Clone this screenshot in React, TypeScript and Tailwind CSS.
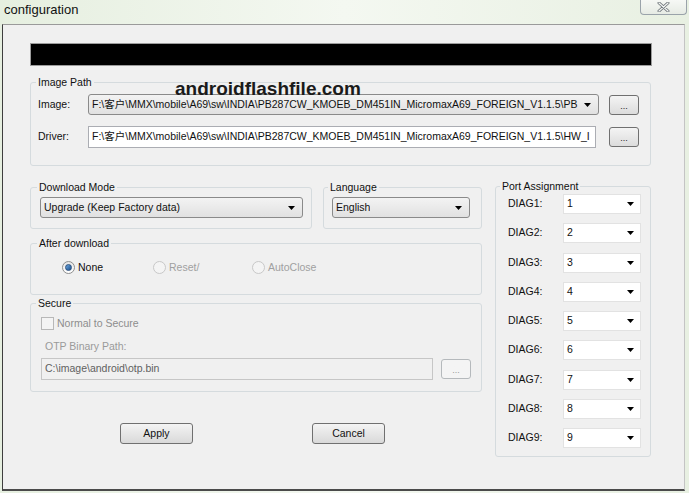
import React from "react";

const FONT = { fontFamily: '"Liberation Sans", "Noto Sans CJK SC", Arial, sans-serif' };

function Arrow() {
  return (
    <svg width="7" height="4" viewBox="0 0 7 4" className="shrink-0">
      <path d="M0 0h7L3.5 4z" fill="#000" />
    </svg>
  );
}

function Combo({ text, w }: { text: string; w: string }) {
  return (
    <div
      className={`${w} flex h-[21px] shrink-0 items-center justify-between overflow-hidden rounded-[3px] border border-[#8a8a8a] bg-gradient-to-b from-[#f3f3f3] to-[#e1e1e1] pl-[3px] pr-[7px]`}
    >
      <span className="overflow-hidden whitespace-nowrap text-[#111]">{text}</span>
      <span className="ml-[6px] flex items-center">
        <Arrow />
      </span>
    </div>
  );
}

function DotsButton({ disabled }: { disabled?: boolean }) {
  return (
    <div
      className={`flex h-[20px] w-[30px] shrink-0 items-center justify-center rounded-[3px] border bg-gradient-to-b ${
        disabled
          ? "border-[#b5b9bc] from-[#f4f4f4] to-[#f4f4f4] text-[#9a9a9a]"
          : "border-[#707070] from-[#f4f4f4] to-[#dcdcdc] text-[#222]"
      } pt-[3px] text-[9px] leading-none`}
    >
      ...
    </div>
  );
}

function Button({ label }: { label: string }) {
  return (
    <div className="flex h-[21px] w-[73px] items-center justify-center rounded-[3px] border border-[#707070] bg-gradient-to-b from-[#f4f4f4] to-[#d9d9d9] text-[#111]">
      {label}
    </div>
  );
}

function Radio({ checked, disabled, label, w }: { checked?: boolean; disabled?: boolean; label: string; w: string }) {
  return (
    <div className={`${w} flex items-center gap-[3px]`}>
      <span
        className={`flex h-[13px] w-[13px] items-center justify-center rounded-full border ${
          disabled ? "border-[#c8c8c8] bg-[#f4f4f4]" : "border-[#8e8f8f] bg-gradient-to-b from-[#e6e6e6] to-[#ffffff]"
        }`}
      >
        {checked && (
          <span className="h-[7px] w-[7px] rounded-full border border-[#2a4f7d] bg-gradient-to-br from-[#6aa7e0] to-[#1b4f8c]" />
        )}
      </span>
      <span className={disabled ? "text-[#a0a0a0]" : "text-[#111]"}>{label}</span>
    </div>
  );
}

function Legend({ children, ml = "ml-[5px]" }: { children: React.ReactNode; ml?: string }) {
  return <legend className={`${ml} px-[2px] leading-[14px] text-[#111]`}>{children}</legend>;
}

function PortRow({ n }: { n: number }) {
  return (
    <div className="flex h-[20px] items-center">
      <span className="w-[55px] text-[#111]">DIAG{n}:</span>
      <div className="flex h-[20px] w-[78px] items-center justify-between border border-[#e2e2e2] bg-white pl-[3px] pr-[6px]">
        <span className="text-[#111]">{n}</span>
        <Arrow />
      </div>
    </div>
  );
}

const FS = "rounded-[3px] border border-[#d5dbde] p-0";

export default function App() {
  const imgPath =
    "F:\\客户\\MMX\\mobile\\A69\\sw\\INDIA\\PB287CW_KMOEB_DM451IN_MicromaxA69_FOREIGN_V1.1.5\\PB";
  const drvPath =
    "F:\\客户\\MMX\\mobile\\A69\\sw\\INDIA\\PB287CW_KMOEB_DM451IN_MicromaxA69_FOREIGN_V1.1.5\\HW_I";
  return (
    <div
      className="relative h-[493px] w-[689px] overflow-hidden bg-gradient-to-r from-[#e6efe0] via-[#f4f8f1] to-[#e8f0e2] text-[10.5px]"
      style={FONT}
    >
      {/* title bar */}
      <div className="flex h-[24px] items-start justify-between">
        <span className="pl-[4px] pt-[1px] text-[13px] leading-[18px] text-[#111]">configuration</span>
        <div className="mr-[2px] flex h-[15px] w-[47px] items-center justify-center rounded-b-[4px] border border-t-0 border-[#9aa3aa] bg-gradient-to-b from-[#f6f8f5] to-[#e6ebe4]">
          <svg width="13" height="10" viewBox="0 0 13 10">
            <path d="M2 1l9 8M11 1L2 9" stroke="#6f767b" strokeWidth="3" strokeLinecap="round" />
            <path d="M2 1l9 8M11 1L2 9" stroke="#f4f6f4" strokeWidth="1.2" strokeLinecap="round" />
          </svg>
        </div>
      </div>

      {/* client area */}
      <div className="ml-[2px] flex h-[467px] w-[683px] flex-col border-t border-r border-b-2 border-l border-t-[#9a9a9a] border-r-[#c4c4c4] border-b-[#4a4a4a] border-l-[#3e3e3e] bg-[#f0f0f0] pt-[18px] pl-[27px]">
        {/* progress bar */}
        <div className="h-[23px] w-[622px] border border-[#9c9c9c] bg-black" />

        {/* Image Path */}
        <fieldset className={`${FS} mt-[9px] h-[91px] w-[621px]`}>
          <Legend ml="ml-[5px]">Image Path</Legend>
          <div className="pt-[5px] pl-[7px]">
            <div className="flex h-[21px] items-center">
              <span className="w-[50px] text-[#111]">Image:</span>
              <Combo text={imgPath} w="w-[511px]" />
              <div className="ml-[10px]">
                <DotsButton />
              </div>
            </div>
            <div className="mt-[11px] flex h-[22px] items-center">
              <span className="w-[50px] text-[#111]">Driver:</span>
              <div className="flex h-[22px] w-[508px] items-center overflow-hidden border border-[#abadb3] bg-white pl-[3px]">
                <span className="whitespace-nowrap text-[#111]">{drvPath}</span>
              </div>
              <div className="ml-[13px]">
                <DotsButton />
              </div>
            </div>
          </div>
        </fieldset>

        {/* lower area */}
        <div className="flex items-start">
          {/* left column */}
          <div className="mt-[14px] flex w-[452px] flex-col">
            <div className="flex">
              <fieldset className={`${FS} h-[49px] w-[282px]`}>
                <Legend ml="ml-[6px]">Download Mode</Legend>
                <div className="pt-[3px] pl-[9px]">
                  <Combo text="Upgrade (Keep Factory data)" w="w-[263px]" />
                </div>
              </fieldset>
              <fieldset className={`${FS} ml-[11px] h-[49px] w-[159px]`}>
                <Legend ml="ml-[4px]">Language</Legend>
                <div className="pt-[3px] pl-[8px]">
                  <Combo text="English" w="w-[138px]" />
                </div>
              </fieldset>
            </div>

            <fieldset className={`${FS} mt-[7px] h-[59px] w-[452px]`}>
              <Legend ml="ml-[6px]">After download</Legend>
              <div className="flex h-[13px] items-center pl-[31px] mt-[11px]">
                <Radio checked label="None" w="w-[91px]" />
                <Radio disabled label="Reset/" w="w-[99px]" />
                <Radio disabled label="AutoClose" w="w-[100px]" />
              </div>
            </fieldset>

            <fieldset className={`${FS} mt-[1px] h-[96px] w-[452px]`}>
              <Legend ml="ml-[5px]">Secure</Legend>
              <div className="pt-[7px] pl-[10px]">
                <div className="flex h-[13px] items-center gap-[3px]">
                  <span className="h-[13px] w-[13px] border border-[#b8b8b8] bg-[#f4f4f4]" />
                  <span className="text-[#8d8d8d]">Normal to Secure</span>
                </div>
                <div className="mt-[9px] ml-[4px] leading-[14px] text-[#9a9a9a]">OTP Binary Path:</div>
                <div className="mt-[5px] flex items-center">
                  <div className="flex h-[22px] w-[392px] items-center border border-[#c6c6c6] bg-[#f0f0f0] pl-[3px] text-[#606060]">
                    C:\image\android\otp.bin
                  </div>
                  <div className="ml-[8px]">
                    <DotsButton disabled />
                  </div>
                </div>
              </div>
            </fieldset>

            <div className="mt-[31px] ml-[90px] flex gap-[119px]">
              <Button label="Apply" />
              <Button label="Cancel" />
            </div>
          </div>

          {/* Port Assignment */}
          <fieldset className={`${FS} mt-[13px] ml-[13px] h-[278px] w-[156px]`}>
            <Legend ml="ml-[4px]">Port Assignment</Legend>
            <div className="flex flex-col gap-[9.25px] pt-[1px] pl-[12px]">
              {[1, 2, 3, 4, 5, 6, 7, 8, 9].map((n) => (
                <PortRow key={n} n={n} />
              ))}
            </div>
          </fieldset>
        </div>
      </div>

      {/* watermark */}
      <div className="absolute top-[79px] left-[175px] text-[19px] leading-none font-bold text-[#1a1a1a]">
        androidflashfile.com
      </div>
    </div>
  );
}
